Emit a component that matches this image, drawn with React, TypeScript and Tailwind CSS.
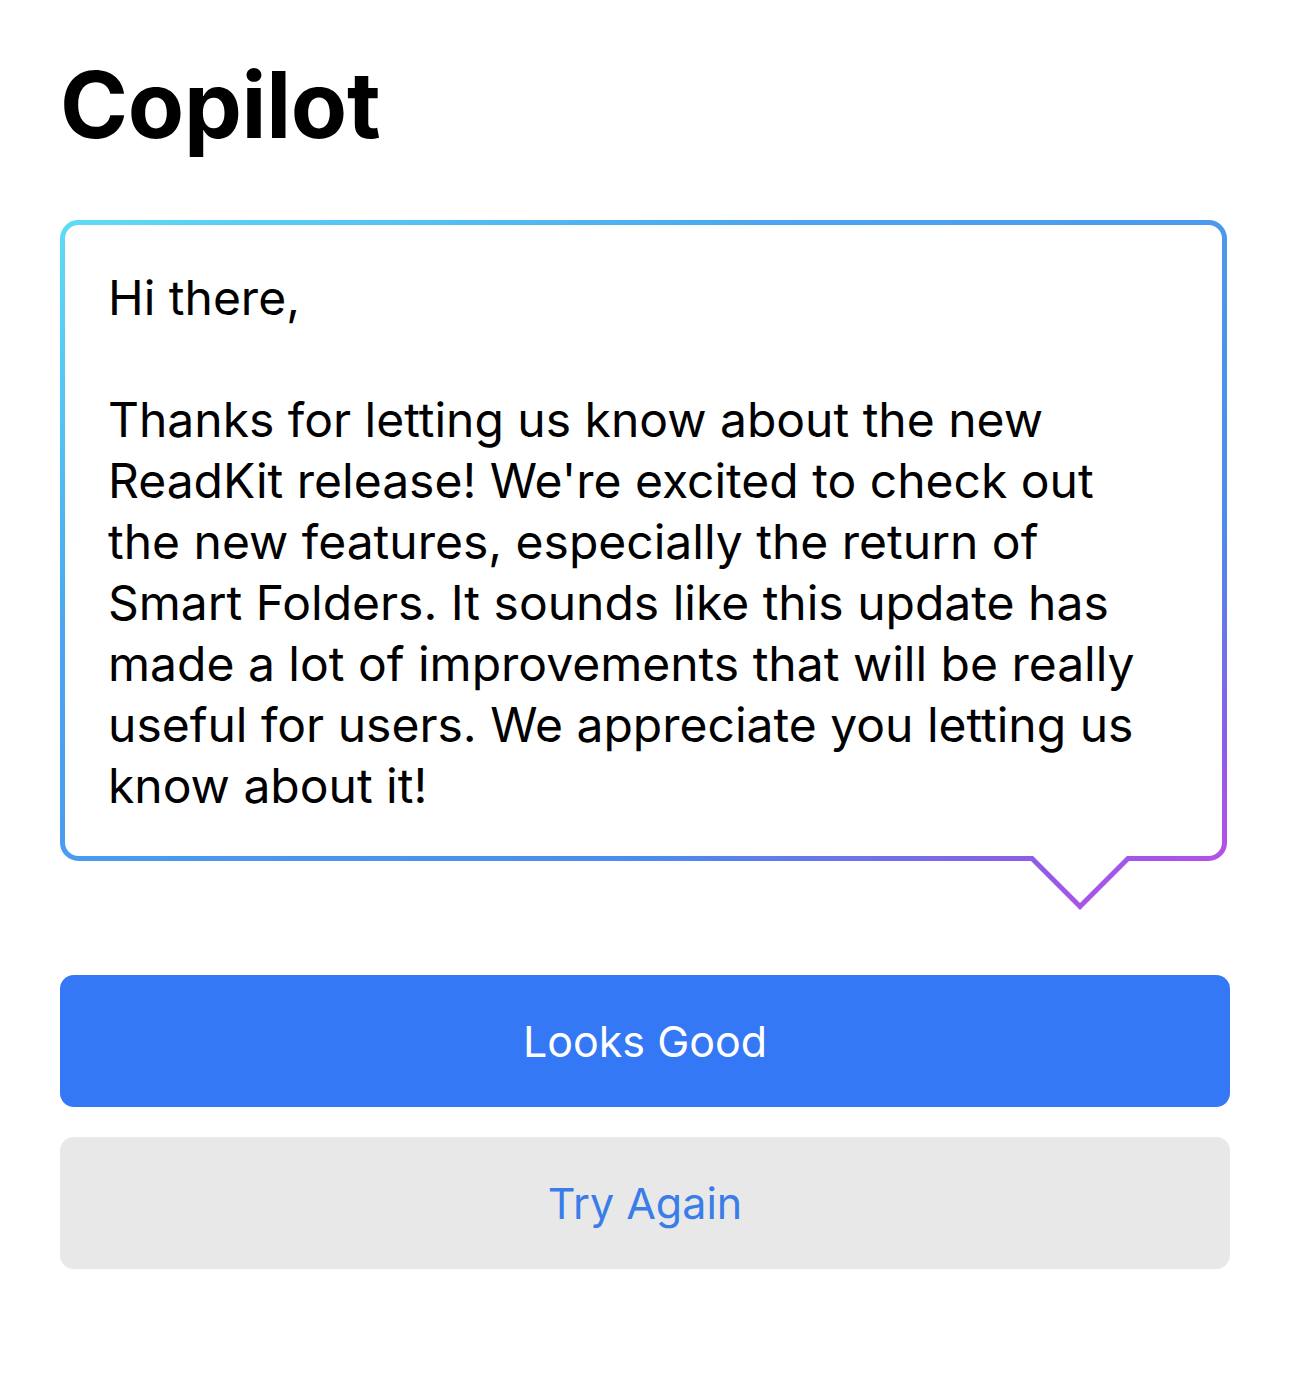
const message = `Hi there,

Thanks for letting us know about the new ReadKit release! We're excited to check out the new features, especially the return of Smart Folders. It sounds like this update has made a lot of improvements that will be really useful for users. We appreciate you letting us know about it!`;

const Bubble = () => (
  <div className="relative w-[1167px] h-[641px]">
    <svg
      className="absolute left-0 top-0 overflow-visible"
      width="1167"
      height="690"
      viewBox="0 0 1167 690"
      fill="none"
    >
      <defs>
        <linearGradient id="bubbleStroke" x1="0" y1="0" x2="1" y2="1">
          <stop offset="0" stopColor="#5edcf6" />
          <stop offset="0.3" stopColor="#4aa6f0" />
          <stop offset="0.72" stopColor="#4b8cea" />
          <stop offset="0.88" stopColor="#8a5ee8" />
          <stop offset="1" stopColor="#c94ae6" />
        </linearGradient>
      </defs>
      <path
        d="M18.5 2.5 H1148.5 A16 16 0 0 1 1164.5 18.5 V622.5 A16 16 0 0 1 1148.5 638.5 H1068 L1020 686.5 L972 638.5 H18.5 A16 16 0 0 1 2.5 622.5 V18.5 A16 16 0 0 1 18.5 2.5 Z"
        fill="#ffffff"
        stroke="url(#bubbleStroke)"
        strokeWidth="5"
        strokeLinejoin="miter"
      />
    </svg>
    <p className="relative whitespace-pre-line pl-[48px] pr-[60px] pt-[47px] text-[48px] leading-[61px] text-black">
      {message}
    </p>
  </div>
);

export default function App() {
  return (
    <div className="min-h-[1386px] w-full bg-white px-[60px] pt-[59px] font-['Inter',sans-serif]">
      <h1 className="text-[92px] font-bold leading-[92px] tracking-[-0.3px] text-black">
        Copilot
      </h1>

      <div className="mt-[69px]">
        <Bubble />
      </div>

      <div className="mt-[114px] flex flex-col gap-[30px]">
        <button className="flex h-[132px] w-full items-center justify-center rounded-[14px] bg-[#3478f6] text-[43px] text-white">
          Looks Good
        </button>
        <button className="flex h-[132px] w-full items-center justify-center rounded-[14px] bg-[#e8e8e8] text-[43px] text-[#3a7de9]">
          Try Again
        </button>
      </div>
    </div>
  );
}
